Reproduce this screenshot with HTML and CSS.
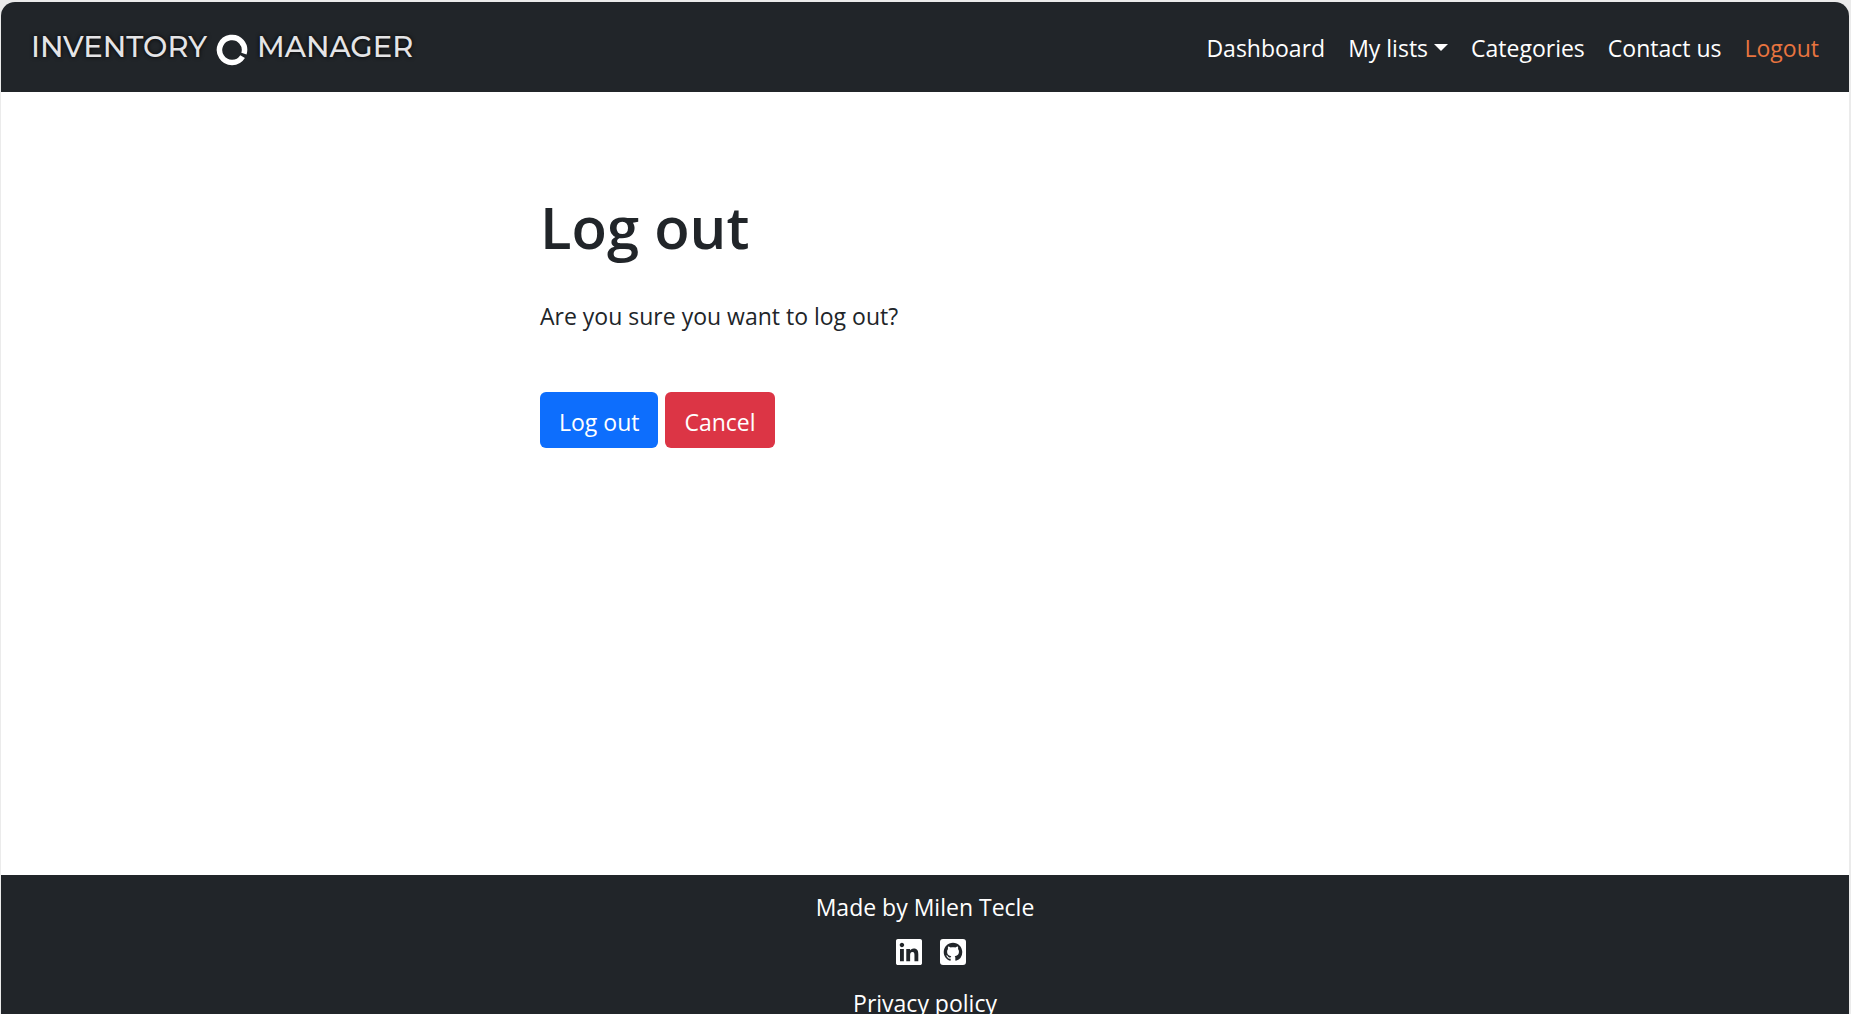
FILE: index.html
```html
<!DOCTYPE html>
<html lang="en">
<head>
<meta charset="utf-8">
<meta name="viewport" content="width=device-width, initial-scale=1">
<title>Inventory Manager - Log out</title>
<link rel="stylesheet" href="styles.css">
</head>
<body>
<div class="page">
  <header class="navbar">
    <a class="brand" href="#" aria-label="Inventory Manager">
      <span>INVENTORY</span>
      <svg class="brand-ring" viewBox="0 0 32 32" aria-hidden="true">
        <path d="M27.950 19.650A12.500 12.500 0 1 0 26.600 22.600" fill="none" stroke="#fff" stroke-width="5.500"/>
      </svg>
      <span>MANAGER</span>
    </a>
    <nav class="menu" aria-label="Main">
      <a class="menu-link" href="#">Dashboard</a>
      <a class="menu-link dropdown" href="#">My lists</a>
      <a class="menu-link" href="#">Categories</a>
      <a class="menu-link" href="#">Contact us</a>
      <a class="menu-link logout" href="#">Logout</a>
    </nav>
  </header>
  <main class="content">
    <form class="panel">
      <h1 class="title">Log out</h1>
      <p class="question">Are you sure you want to log out?</p>
      <div class="actions">
        <button class="btn primary" type="submit">Log out</button>
        <button class="btn danger" type="button">Cancel</button>
      </div>
    </form>
  </main>
  <footer class="footer">
    <p class="credit">Made by Milen Tecle</p>
    <div class="social">
      <a class="social-link" href="#" aria-label="LinkedIn">
        <svg viewBox="0 32 448 448" aria-hidden="true"><path fill="currentColor" d="M416 32H31.900C14.300 32 0 46.500 0 64.300v383.400C0 465.500 14.300 480 31.900 480H416c17.600 0 32-14.500 32-32.300V64.300c0-17.800-14.400-32.300-32-32.300zM135.400 416H69V202.200h66.500V416zm-33.200-243c-21.300 0-38.500-17.300-38.500-38.500S80.900 96 102.200 96c21.200 0 38.500 17.300 38.500 38.500 0 21.300-17.200 38.500-38.500 38.500zm282.100 243h-66.400V312c0-24.800-.5-56.700-34.500-56.700-34.600 0-39.900 27-39.900 54.900V416h-66.400V202.200h63.700v29.200h.9c8.900-16.800 30.600-34.500 62.900-34.500 67.200 0 79.700 44.300 79.700 101.900V416z"/></svg>
      </a>
      <a class="social-link" href="#" aria-label="GitHub">
        <svg viewBox="0 32 448 448" aria-hidden="true">
          <rect y="32" width="448" height="448" rx="52" fill="currentColor"/>
          <path class="mark" transform="translate(64 96) scale(20)" d="M8 0C3.580 0 0 3.580 0 8c0 3.540 2.290 6.530 5.470 7.590.4.070.55-.17.55-.38 0-.19-.01-.82-.01-1.490-2.010.37-2.530-.49-2.690-.94-.09-.23-.48-.94-.82-1.130-.28-.15-.68-.52-.01-.53.63-.01 1.080.58 1.230.82.72 1.210 1.870.87 2.330.66.07-.52.28-.87.51-1.070-1.780-.2-3.640-.89-3.640-3.950 0-.87.31-1.590.82-2.150-.08-.2-.36-1.020.08-2.120 0 0 .67-.21 2.200.82.64-.18 1.320-.27 2-.27s1.360.09 2 .27c1.530-1.040 2.200-.82 2.200-.82.44 1.100.16 1.920.08 2.120.51.56.82 1.270.82 2.150 0 3.070-1.870 3.750-3.650 3.950.29.25.54.73.54 1.480 0 1.070-.01 1.930-.01 2.200 0 .21.15.46.55.38A8.010 8.010 0 0 0 16 8c0-4.420-3.580-8-8-8z"/>
        </svg>
      </a>
    </div>
    <a class="policy" href="#">Privacy policy</a>
  </footer>
</div>
</body>
</html>
```
FILE: styles.css
```css
* { box-sizing: border-box; }

body {
  margin: 0;
  padding: 2px 2px 0 1px;
  height: 100vh;
  overflow: hidden;
  background: #ebebeb;
  color: #212529;
  font-family: "Segoe UI", "Open Sans", sans-serif;
  font-size: 23px;
  line-height: 36px;
}

.page {
  height: 100%;
  overflow: hidden;
  border-radius: 14px 14px 0 0;
  background: #fff;
}

.navbar {
  display: flex;
  align-items: center;
  justify-content: space-between;
  height: 90px;
  padding: 0 30px;
  background: #212529;
}

.brand {
  display: flex;
  align-items: center;
  gap: 9px;
  color: #e4e4e6;
  font-family: Montserrat, Inter, sans-serif;
  font-size: 29px;
  font-weight: 500;
  text-decoration: none;
  text-shadow: 0 0 4px #000;
}

.brand-ring { width: 32px; height: 32px; margin-top: 6px; }

.menu { display: flex; gap: 23px; padding-top: 2px; }
.menu-link { color: #fff; text-decoration: none; }
.menu-link.logout { color: #e8743f; }

.dropdown::after {
  content: "";
  display: inline-block;
  margin-left: 6px;
  vertical-align: 6px;
  border: 7px solid transparent;
  border-top-color: #fff;
  border-bottom: 0;
}

.content {
  min-height: calc(100vh - 231px);
  padding-top: 99px;
}

.panel { width: calc(100% * 5 / 12); margin: 0 auto; }

.title {
  margin: 0 0 35px;
  font-size: 58px;
  font-weight: 600;
  line-height: 72px;
}

.question { margin: 0 0 58px; }
.actions { display: flex; gap: 7px; }

.btn {
  height: 56px;
  padding: 4px 19px 0;
  border: 0;
  border-radius: 6px;
  color: #fff;
  font: inherit;
}

.primary { background: #0d6efd; }
.danger { background: #dc3545; }

.footer {
  display: flex;
  flex-direction: column;
  align-items: center;
  padding: 14px 24px;
  background: #212529;
  color: #fff;
}

.credit { margin: 0; }
.social { display: flex; gap: 18px; padding: 14px 0 20px 12px; }
.social-link { display: block; width: 26px; height: 26px; color: #fff; }
.social-link svg { display: block; }
.mark { fill: #212529; }
.policy { color: #fff; text-decoration: none; }
```
